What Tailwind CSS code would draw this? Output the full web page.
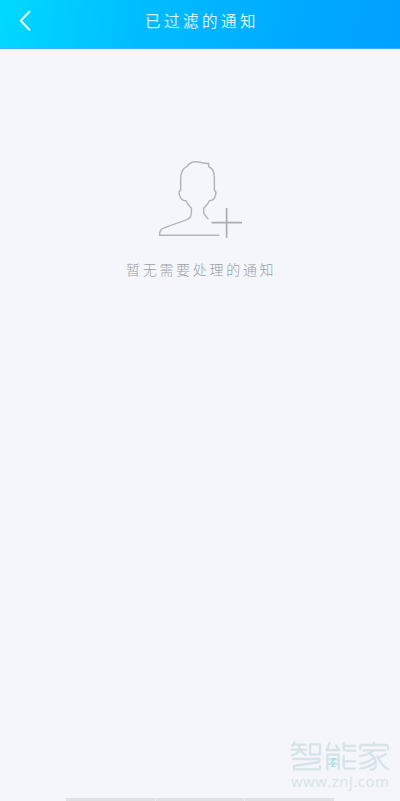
<!DOCTYPE html>
<html lang="zh-CN">
<head>
<meta charset="utf-8">
<meta name="viewport" content="width=device-width, initial-scale=1">
<title>已过滤的通知</title>
<script src="https://cdn.jsdelivr.net/npm/@tailwindcss/browser@4"></script>
</head>
<body class="bg-[#f4f6fb] font-['Noto_Sans_CJK_SC',sans-serif]">
<div class="flex h-[801px] w-[400px] flex-col overflow-hidden">
  <header class="grid h-[49px] shrink-0 grid-cols-[50px_1fr_50px] border-b border-[#40aef0] bg-linear-[100deg,#00d9ff_0%,#00bdff_35%,#00a9ff_75%,#00a1ff_100%]">
    <button aria-label="返回" class="flex items-start pt-[10px] pl-[18px]">
      <svg class="block h-[22px] w-[14px]" viewBox="0 0 14 22" fill="none" stroke="#e8fcff" stroke-width="2.1" stroke-linecap="round" stroke-linejoin="round"><path d="M11.3 1.8 2.8 10.8l8.5 9"/></svg>
    </button>
    <h1 class="pt-[8px] pl-[95px] text-[15.5px] leading-[24px] font-normal tracking-[3.5px] whitespace-nowrap text-[#d8f5ff]">已过滤的通知</h1>
  </header>
  <main class="flex grow flex-col pt-[101px]">
    <svg class="ml-[145px] block h-[95px] w-[110px] shrink-0" viewBox="0 0 330 285" fill="none" stroke="#b5b6b9" stroke-width="4.5" stroke-linecap="round" stroke-linejoin="round">
      <path d="M222 256H44C43 246 48 237 59 233L126 209Q139 203 139 190V174C133 168 126 163 123 152C111 153 106 145 103 134Q101 123 107 121V86C107 67 114 55 126 49C134 37 146 33 160 36C171 39 180 41 191 40V50C203 54 208 68 208 83V121Q215 125 212 134C210 145 204 152 193 152C190 163 182 168 176 175V186Q176 193 189 206"/>
      <path stroke-linecap="butt" stroke-width="5" stroke="#acadb0" d="M200 218H291M245 174V263"/>
    </svg>
    <p class="mt-[12px] ml-[126px] text-[14px] leading-[24px] font-light tracking-[2.7px] whitespace-nowrap text-[#9c9ea2]">暂无需要处理的通知</p>
    <div class="mt-auto ml-[290px] h-[58px] w-[102px] text-[#d6e3e8]">
      <div class="relative h-[32px] w-[102px]">
        <svg class="block h-[32px] w-[102px]" viewBox="0 0 306 96" role="img" aria-label="智能家" fill="none" stroke="currentColor" stroke-width="7" stroke-linejoin="round" stroke-linecap="round">
          <path d="M14 7 6 17M11 14H47M5 29H48M28 14V29Q24 42 6 46M33 35 47 45M60 13H90V43H60ZM10 57H88V66L12 78V88H90V79"/>
          <path d="M119 9 110 30H145M138 16 148 30M112 88V44H146V88M112 58H146M112 72H146M161 10V25Q161 32 169 32H195M161 18H195M161 48V78Q161 86 169 86H195M161 64H195"/>
          <path d="M211 28V20Q211 15 217 15H288Q294 15 294 21V28M252 8V15M221 31H285M250 32Q237 44 211 48M239 41Q258 49 258 75Q258 89 241 89M250 54Q237 67 211 71M255 67Q238 82 211 86M288 42 264 54M263 49Q272 76 295 88"/>
        </svg>
        <svg class="absolute top-[17px] left-[39px] h-[11px] w-[8px]" viewBox="0 0 8 11" fill="none" stroke="#91e4e9" stroke-width="1.2"><path d="M2 1.5H6L2 6M6 5 3 9.5H6"/></svg>
      </div>
      <div class="pl-[1px] font-['Open_Sans',sans-serif] text-[15px] leading-[19px] tracking-[0.5px] whitespace-nowrap">www.znj.com</div>
    </div>
    <div class="ml-[66px] flex h-[3px] w-[268px] shrink-0 gap-px bg-[#eceef3]">
      <div class="w-[89px] bg-[#dfe1e5]"></div><div class="w-[88px] bg-[#dfe1e5]"></div><div class="w-[89px] bg-[#dfe1e5]"></div>
    </div>
  </main>
</div>
</body>
</html>
